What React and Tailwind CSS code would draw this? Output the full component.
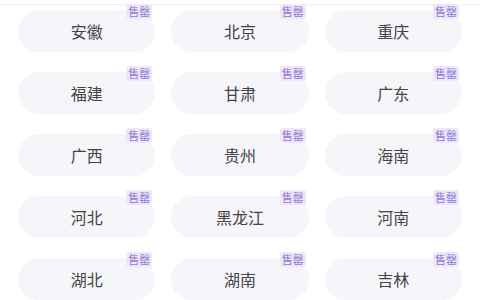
import React from 'react';

const provinces = [
  '安徽', '北京', '重庆',
  '福建', '甘肃', '广东',
  '广西', '贵州', '海南',
  '河北', '黑龙江', '河南',
  '湖北', '湖南', '吉林',
];

export default function App() {
  return (
    <div
      className="w-[480px] h-[300px] overflow-hidden bg-white"
      style={{ fontFamily: '"Noto Sans CJK SC", "Noto Sans", sans-serif' }}
    >
      <div className="h-[5px] border-b border-[#f2f2f4]" />
      <div className="grid grid-cols-3 gap-x-[16px] gap-y-[20px] px-[18px] pt-[5px]">
        {provinces.map((p) => (
          <div
            key={p}
            className="relative h-[42px] rounded-full bg-[#f5f5fa] flex items-center justify-center"
          >
            <span className="text-[16px] text-[#444444]">{p}</span>
            {/* 售罄 标签 */}
            <span className="absolute -top-[6px] right-[3px] px-[2px] h-[15px] leading-[15px] text-[11px] text-[#9379cc] bg-[#ede7fb] rounded-[3px]">
              售罄
            </span>
          </div>
        ))}
      </div>
    </div>
  );
}
